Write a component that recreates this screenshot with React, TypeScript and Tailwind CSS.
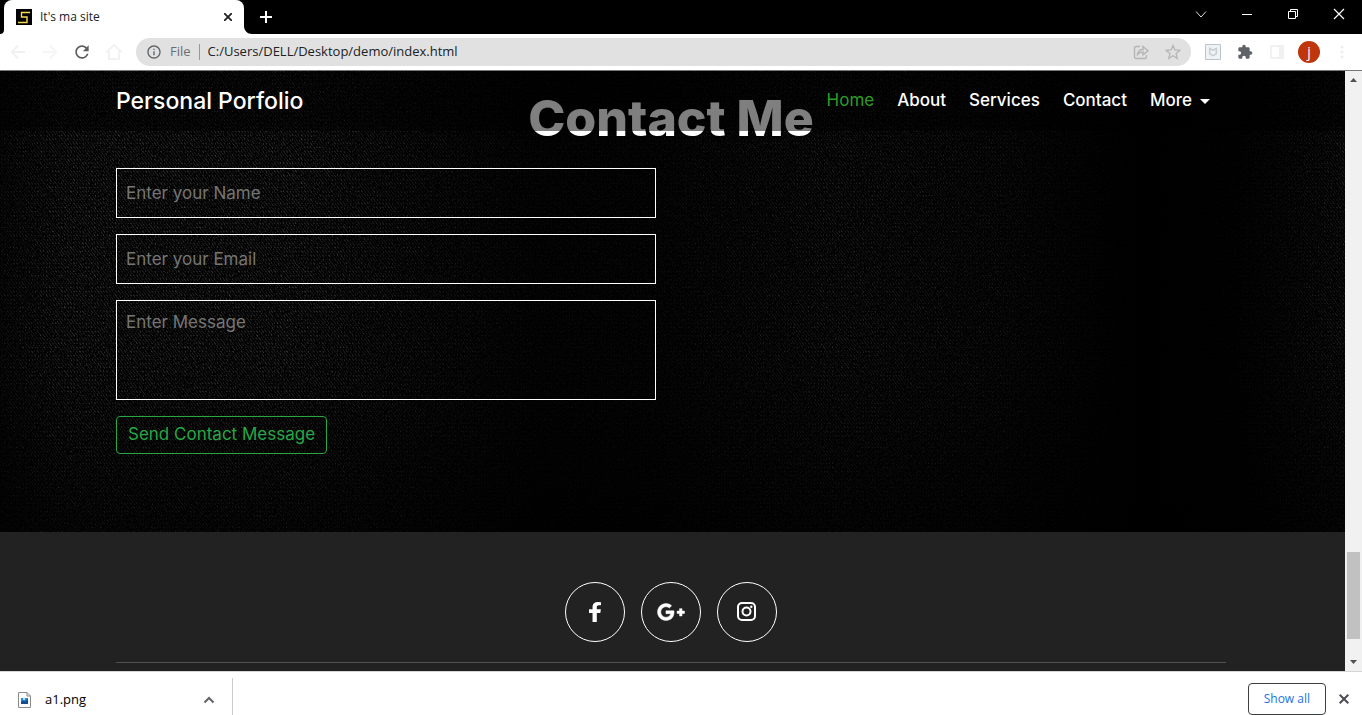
import type { ReactNode } from "react";
import { FaGooglePlusG } from "react-icons/fa6";
import { MdExtension, MdRefresh, MdOutlineInfo } from "react-icons/md";

function ToolButton({ label, children, className = "" }: { label: string; children: ReactNode; className?: string }) {
  return (
    <button type="button" aria-label={label} className={`flex size-5 shrink-0 items-center justify-center ${className}`}>
      {children}
    </button>
  );
}

function TabStrip() {
  return (
    <div className="flex h-[34px] shrink-0 items-stretch bg-black pl-1 text-white">
      <div className="relative flex w-60 items-center gap-2 rounded-t-lg bg-white px-3 text-xs text-[#202124]">
        <svg className="absolute bottom-0 -left-1 size-1" viewBox="0 0 4 4" fill="#fff" aria-hidden="true">
          <path d="M4 0v4H0c2.500 0 4-1.500 4-4z" />
        </svg>
        <svg className="absolute -right-2 bottom-0 size-2" viewBox="0 0 8 8" fill="#fff" aria-hidden="true">
          <path d="M0 0v8h8C3.500 8 0 4.500 0 0z" />
        </svg>
        <svg className="size-4 shrink-0" viewBox="0 0 16 16" aria-hidden="true">
          <path fill="#000" d="M0 0h16v16H0z" />
          <path fill="none" stroke="#f5dc55" strokeWidth="1.400" d="M14 3.500H5.500V8H11v5.500H2" />
        </svg>
        <span className="flex-1">It's ma site</span>
        <button type="button" aria-label="Close tab" className="flex h-5 w-2 items-center justify-center">
          <svg className="size-2" viewBox="0 0 8 8" stroke="#202124" strokeWidth="1.800" aria-hidden="true">
            <path d="M0 0l8 8M8 0L0 8" />
          </svg>
        </button>
      </div>
      <button type="button" aria-label="New tab" className="ml-3 flex w-5 items-center justify-center">
        <svg className="size-3" viewBox="0 0 12 12" stroke="#fff" strokeWidth="2" aria-hidden="true">
          <path d="M6 0v12M0 6h12" />
        </svg>
      </button>
      <div className="ml-auto flex h-7 items-center gap-[26px] pr-[13px]">
        <ToolButton label="Search tabs">
          <svg className="h-3 w-3" viewBox="0 0 12 12" fill="none" stroke="#ddd" aria-hidden="true">
            <path d="M1 3.500l5 5.500 5-5.500" />
          </svg>
        </ToolButton>
        <ToolButton label="Minimize">
          <svg className="h-3 w-3" viewBox="0 0 12 12" stroke="#fff" aria-hidden="true">
            <path d="M1 6.500h10" />
          </svg>
        </ToolButton>
        <ToolButton label="Restore">
          <svg className="h-3 w-3" viewBox="0 0 12 12" fill="none" stroke="#fff" aria-hidden="true">
            <path d="M1.500 3.500h7v7h-7zM3.500 3.500v-2h7v7h-2" />
          </svg>
        </ToolButton>
        <ToolButton label="Close window">
          <svg className="h-3 w-3" viewBox="0 0 12 12" stroke="#fff" strokeWidth="1.200" aria-hidden="true">
            <path d="M1 1l10 10M11 1L1 11" />
          </svg>
        </ToolButton>
      </div>
    </div>
  );
}

function Toolbar() {
  return (
    <div className="flex h-[37px] shrink-0 items-center border-b border-[#777] bg-white pr-[10px] pl-2">
      <div className="flex items-center gap-3">
        <ToolButton label="Back">
          <svg className="size-4" viewBox="0 0 16 16" fill="none" stroke="#eff1f2" strokeWidth="2" aria-hidden="true">
            <path d="M15 8H2M8 1.500L1.800 8 8 14.500" />
          </svg>
        </ToolButton>
        <ToolButton label="Forward">
          <svg className="size-4" viewBox="0 0 16 16" fill="none" stroke="#f4f5f6" strokeWidth="2" aria-hidden="true">
            <path d="M1 8h13M8 1.500L14.200 8 8 14.500" />
          </svg>
        </ToolButton>
        <ToolButton label="Reload">
          <MdRefresh className="size-5 shrink-0 text-[#5a5d61]" />
        </ToolButton>
        <ToolButton label="Home page">
          <svg className="size-4" viewBox="0 0 16 16" fill="none" stroke="#f1f2f3" strokeWidth="2" aria-hidden="true">
            <path d="M0 8.500L8 1l8 7.500M3 7v8h10V7" />
          </svg>
        </ToolButton>
      </div>
      <div className="ml-3 flex h-7 flex-1 items-center rounded-full bg-[#e1e1e1] pr-2 pl-[10px] text-[13px]">
        <MdOutlineInfo className="size-4 shrink-0 text-[#5f6368]" />
        <span className="ml-2 text-[#6b6e72]">File</span>
        <span className="mr-2 ml-2 h-4 w-px bg-[#999]" />
        <input
          aria-label="Address"
          defaultValue="C:/Users/DELL/Desktop/demo/index.html"
          className="min-w-0 flex-1 bg-transparent text-[#202124] outline-none"
        />
        <ToolButton label="Share" className="mr-3">
          <svg className="size-4" viewBox="0 0 16 16" fill="none" stroke="#b4b5b7" strokeWidth="1.400" aria-hidden="true">
            <path d="M7 2.500H3.200A1.700 1.700 0 001.500 4.200v8.600a1.700 1.700 0 001.700 1.700h8.600a1.700 1.700 0 001.700-1.700V11" />
            <path d="M4.500 10.500C5 7 7 5.500 10 5.500V2.500l5 4.300-5 4V8C7.500 8 6 8.700 4.500 10.500z" />
          </svg>
        </ToolButton>
        <ToolButton label="Bookmark">
          <svg className="size-4" viewBox="0 0 16 16" fill="none" stroke="#b4b5b7" strokeWidth="1.300" aria-hidden="true">
            <path d="M8 1.500l1.900 4.500 4.900.4-3.700 3.200 1.100 4.800L8 11.800l-4.200 2.600 1.100-4.800L1.200 6.400l4.900-.4z" />
          </svg>
        </ToolButton>
      </div>
      <div className="ml-3 flex items-center gap-3">
        <ToolButton label="Security extension">
          <svg className="size-4" viewBox="0 0 16 16" aria-hidden="true">
            <path fill="#eff3f5" stroke="#bcc5ca" d="M.5.500h15v15H.5z" />
            <path fill="none" stroke="#c9ced1" strokeWidth="1.500" d="M4.700 4.500L8 6.200l3.300-1.700v5.300L8 11.700 4.700 9.800z" />
          </svg>
        </ToolButton>
        <ToolButton label="Extensions">
          <MdExtension className="size-4 text-[#5f6368]" />
        </ToolButton>
        <ToolButton label="Side panel">
          <svg className="size-4" viewBox="0 0 16 16" fill="#eff1f3" aria-hidden="true">
            <path fillRule="evenodd" d="M1 1h14v14H1zM3 3v10h7V3z" />
          </svg>
        </ToolButton>
        <button type="button" className="-ml-px flex size-[22px] items-center justify-center rounded-full bg-[#bf360c] text-sm leading-none text-white">
          j
        </button>
        <ToolButton label="Menu">
          <svg className="size-4" viewBox="0 0 16 16" fill="#eceef0" aria-hidden="true">
            <circle cx="8" cy="3" r="1.600" />
            <circle cx="8" cy="8" r="1.600" />
            <circle cx="8" cy="13" r="1.600" />
          </svg>
        </ToolButton>
      </div>
    </div>
  );
}

function ClothTexture() {
  return (
    <svg className="absolute inset-0 h-full w-full" aria-hidden="true">
      <defs>
        <filter id="grain" x="0" y="0" width="100%" height="100%" colorInterpolationFilters="sRGB">
          <feTurbulence type="fractalNoise" baseFrequency="0.65 0.45" numOctaves="2" seed="4" />
          <feColorMatrix values="0.800 0 0 0 -0.240  0.800 0 0 0 -0.240  0.800 0 0 0 -0.240  0 0 0 0 1" />
        </filter>
        <pattern id="weave" width="3" height="4" patternUnits="userSpaceOnUse">
          <path fill="#000" fillOpacity="0.800" d="M0 0h1v2H0zM1 1h1v2H1zM2 2h1v2H2zM0 3h1v1H0z" />
        </pattern>
        <linearGradient id="folds">
          <stop offset="0" stopColor="#404040" />
          <stop offset="0.050" stopColor="#808080" />
          <stop offset="0.220" stopColor="#808080" />
          <stop offset="0.320" stopColor="#484848" />
          <stop offset="0.400" stopColor="#202020" />
          <stop offset="0.480" stopColor="#242424" />
          <stop offset="0.620" stopColor="#5c5c5c" />
          <stop offset="0.740" stopColor="#404040" />
          <stop offset="0.850" stopColor="#000" />
          <stop offset="0.920" stopColor="#101010" />
          <stop offset="1" stopColor="#5c5c5c" />
        </linearGradient>
        <mask id="shade">
          <rect width="100%" height="100%" fill="url(#folds)" />
        </mask>
        <linearGradient id="floor" x2="0" y2="1">
          <stop offset="0.600" stopColor="#000" stopOpacity="0" />
          <stop offset="1" stopColor="#000" stopOpacity="0.600" />
        </linearGradient>
      </defs>
      <g mask="url(#shade)">
        <rect width="100%" height="100%" filter="url(#grain)" />
        <rect width="100%" height="100%" fill="url(#weave)" />
      </g>
      <rect width="100%" height="100%" fill="url(#floor)" />
    </svg>
  );
}

const links = ["About", "Services", "Contact"];

function SiteNav() {
  return (
    <header className="absolute inset-x-0 top-0 z-10 bg-black/50 pr-[3px]">
      <nav className="mx-auto flex h-[60px] max-w-[1110px] items-center justify-between pr-4 text-[17px] font-medium text-white">
        <a href="#top" className="text-[23px]">Personal Porfolio</a>
        <div className="flex items-center gap-[23px]">
          <a href="#home" className="font-normal text-[#2d9c27]">Home</a>
          {links.map((name) => (
            <a key={name} href={`#${name.toLowerCase()}`}>{name}</a>
          ))}
          <button type="button" className="flex items-center gap-2">
            More
            <svg className="h-[5px] w-[10px]" viewBox="0 0 10 5" fill="#fff" aria-hidden="true">
              <path d="M0 0h10L5 5z" />
            </svg>
          </button>
        </div>
      </nav>
    </header>
  );
}

const field =
  "block w-full border border-white bg-transparent px-[9px] text-[17px] text-white outline-none placeholder:text-[#757575] placeholder:opacity-100";

function ContactSection() {
  return (
    <section className="relative shrink-0 bg-black pt-[11px] pr-[3px] pb-[78px]">
      <ClothTexture />
      <div className="relative mx-auto max-w-[1110px]">
        <h1 className="text-center text-[50px] leading-[72px] font-extrabold text-white">Contact Me</h1>
        <form className="mt-[14px] flex w-[540px] max-w-full flex-col items-start gap-4" onSubmit={(e) => e.preventDefault()}>
          <input aria-label="Name" placeholder="Enter your Name" className={`${field} h-[50px]`} />
          <input aria-label="Email" type="email" placeholder="Enter your Email" className={`${field} h-[50px]`} />
          <textarea aria-label="Message" placeholder="Enter Message" className={`${field} h-[100px] resize-none pt-[9px]`} />
          <button type="submit" className="h-[38px] rounded border border-[#28a745] px-[11px] text-[17px] text-[#28a745]">
            Send Contact Message
          </button>
        </form>
      </div>
    </section>
  );
}

const social = "flex size-[60px] items-center justify-center rounded-full border border-white text-white";

function SiteFooter() {
  return (
    <footer className="flex-1 bg-[#222] pt-[50px] pr-[3px]">
      <div className="mx-auto max-w-[1110px] border-b border-[#505050] pb-5">
        <div className="flex justify-center gap-4">
          <a href="#facebook" aria-label="Facebook" className={social}>
            <svg className="h-5 w-3" viewBox="479 0 864 1664" preserveAspectRatio="none" fill="currentColor" aria-hidden="true">
              <path d="M1343 12v264h-157q-86 0-116 36t-30 108v189h293l-39 296h-254v759H734V905H479V609h255V391q0-186 104-288.500T1115 0q147 0 228 12z" />
            </svg>
          </a>
          <a href="#google-plus" aria-label="Google Plus" className={social}>
            <FaGooglePlusG className="size-7 stroke-current stroke-[12]" />
          </a>
          <a href="#instagram" aria-label="Instagram" className={social}>
            <svg className="size-5" viewBox="0 0 20 20" fill="none" stroke="currentColor" strokeWidth="2" aria-hidden="true">
              <rect x="1" y="1" width="17" height="17" rx="4" />
              <circle cx="9.500" cy="9.500" r="4" />
              <circle cx="14.300" cy="4.700" r="1.200" fill="currentColor" stroke="none" />
            </svg>
          </a>
        </div>
      </div>
    </footer>
  );
}

function Scrollbar() {
  return (
    <div className="flex w-[17px] shrink-0 flex-col items-center bg-[#f1f1f1]" aria-hidden="true">
      <svg className="h-[17px] w-full shrink-0" viewBox="0 0 17 17" fill="#505050">
        <path d="M5 11l3.500-4 3.500 4z" />
      </svg>
      <div className="w-full flex-1" />
      <div className="h-[87px] w-[13px] shrink-0 bg-[#c1c1c1]" />
      <svg className="mt-[15px] h-[17px] w-full shrink-0" viewBox="0 0 17 17" fill="#505050">
        <path d="M5 6l3.500 4L12 6z" />
      </svg>
    </div>
  );
}

function DownloadBar() {
  return (
    <div className="flex h-11 shrink-0 items-end border-t border-[#d5d5d5] bg-white">
      <div className="flex h-[37px] w-[233px] items-center border-r border-[#ccc] pt-[6px] pr-[13px] pl-[18px] text-[13px] text-black">
        <svg className="h-4 w-[13px] shrink-0" viewBox="0 0 13 16" aria-hidden="true">
          <path fill="#fafafa" stroke="#8c8c8c" d="M.5.500h8.500l3.500 3.500v11.500H.5z" />
          <path fill="none" stroke="#8c8c8c" d="M9 .5V4h3.500" />
          <path fill="#2588d8" d="M3 6h7v6H3z" />
          <path fill="#174a8c" d="M3 10l2-1.500 2 1 3-2.500v5H3z" />
          <path fill="#a8e0ff" d="M5 6h2v2H5z" />
        </svg>
        <span className="ml-[14px] flex-1">a1.png</span>
        <ToolButton label="Download options">
          <svg className="h-2 w-3" viewBox="0 0 12 8" fill="none" stroke="#5f6368" strokeWidth="2" aria-hidden="true">
            <path d="M1.500 6.500L6 2l4.500 4.500" />
          </svg>
        </ToolButton>
      </div>
      <div className="ml-auto flex h-full items-start gap-2 pt-[11px] pr-2">
        <button type="button" className="h-8 rounded border border-[#3c4043] px-[15px] text-xs font-medium text-[#1a73e8]">
          Show all
        </button>
        <ToolButton label="Close downloads" className="mt-[6px]">
          <svg className="size-[10px]" viewBox="0 0 10 10" stroke="#4a4d51" strokeWidth="2" aria-hidden="true">
            <path d="M.7.700l8.600 8.600M9.300.7L.7 9.300" />
          </svg>
        </ToolButton>
      </div>
    </div>
  );
}

export default function App() {
  return (
    <div className="flex h-screen flex-col overflow-hidden font-['Open_Sans','Noto_Sans',sans-serif]">
      <TabStrip />
      <Toolbar />
      <div className="flex min-h-0 flex-1">
        <main className="relative flex min-w-0 flex-1 flex-col overflow-hidden font-['Inter',sans-serif]">
          <SiteNav />
          <ContactSection />
          <SiteFooter />
        </main>
        <Scrollbar />
      </div>
      <DownloadBar />
    </div>
  );
}
